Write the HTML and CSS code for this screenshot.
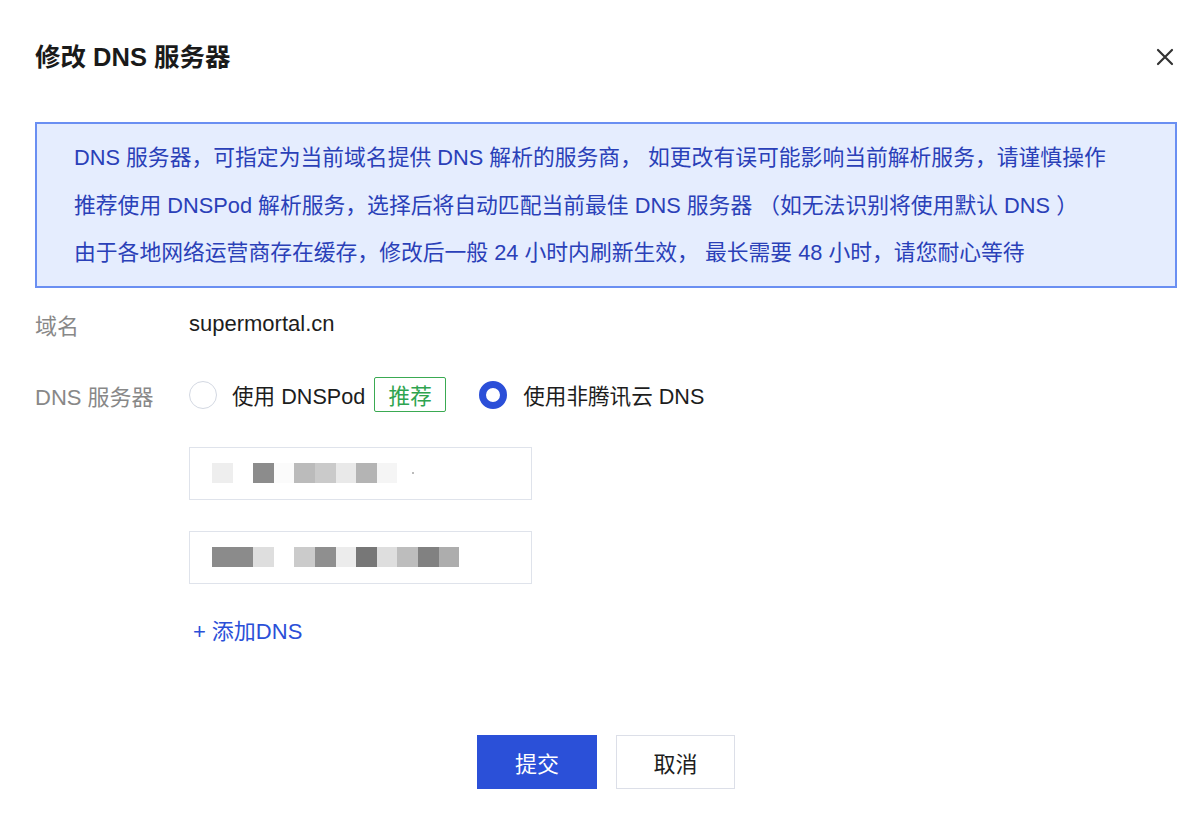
FILE: index.html
```html
<!DOCTYPE html>
<html lang="zh-CN">
<head>
<meta charset="utf-8">
<title>修改 DNS 服务器</title>
<link rel="stylesheet" href="styles.css">
</head>
<body>
<div class="dialog">
  <div class="header">
    <h1 class="title">修改 DNS 服务器</h1>
    <button class="close" aria-label="关闭">
      <svg width="18" height="18" viewBox="0 0 18 18"><path d="M2 2L16 16M16 2L2 16" stroke="#333" stroke-width="2.2" stroke-linecap="round"/></svg>
    </button>
  </div>

  <div class="notice">
    <p>DNS 服务器，可指定为当前域名提供 DNS 解析的服务商， 如更改有误可能影响当前解析服务，请谨慎操作</p>
    <p>推荐使用 DNSPod 解析服务，选择后将自动匹配当前最佳 DNS 服务器 （如无法识别将使用默认 DNS ）</p>
    <p>由于各地网络运营商存在缓存，修改后一般 24 小时内刷新生效， 最长需要 48 小时，请您耐心等待</p>
  </div>

  <div class="row row-domain">
    <div class="label">域名</div>
    <div class="value">supermortal.cn</div>
  </div>

  <div class="row row-dns">
    <div class="label">DNS 服务器</div>
    <div class="radios">
      <label class="radio">
        <span class="dot"></span>
        <span class="rtext">使用 DNSPod</span>
        <span class="tag">推荐</span>
      </label>
      <label class="radio checked">
        <span class="dot"></span>
        <span class="rtext">使用非腾讯云 DNS</span>
      </label>
    </div>
  </div>

  <div class="fields">
    <div class="input">
      <span class="px m-e"></span><span class="px m-w"></span><span class="px m-8c"></span><span class="px m-fb"></span><span class="px m-bb"></span><span class="px m-ca"></span><span class="px m-e9"></span><span class="px m-b4"></span><span class="px m-f5"></span><span class="pdot"></span>
    </div>
    <div class="input">
      <span class="px m-8b"></span><span class="px m-8b"></span><span class="px m-de"></span><span class="px m-w"></span><span class="px m-cb"></span><span class="px m-8f"></span><span class="px m-ec"></span><span class="px m-77"></span><span class="px m-de"></span><span class="px m-bd"></span><span class="px m-81"></span><span class="px m-ad"></span>
    </div>
    <a class="add" href="#"><span class="plus">+</span>添加DNS</a>
  </div>

  <div class="footer">
    <button class="btn primary">提交</button>
    <button class="btn">取消</button>
  </div>
</div>
</body>
</html>
```

FILE: styles.css
```css
* { box-sizing: border-box; }
html, body { margin: 0; padding: 0; background: #fff; }
body {
  font-family: "Liberation Sans", "Noto Sans CJK SC", sans-serif;
  color: #1d1d1d;
}
.dialog {
  width: 1200px;
  height: 816px;
  padding: 36px 23px 0 35px;
}
.header {
  display: flex;
  justify-content: space-between;
  align-items: center;
  height: 42px;
}
.title {
  margin: 0;
  font-size: 25.5px;
  font-weight: 700;
  line-height: 42px;
  color: #1a1a1a;
}
.close {
  border: 0;
  background: none;
  padding: 0;
  margin-right: 3px;
  width: 18px;
  height: 18px;
  display: flex;
}
.notice {
  margin-top: 44px;
  border: 2px solid #6a8ff2;
  background: #e5edfe;
  padding: 10px 30px 9px 37px;
  color: #2a40b8;
  font-size: 21.8px;
  line-height: 47.5px;
}
.notice p { margin: 0; white-space: nowrap; }

.row {
  display: flex;
  align-items: center;
  font-size: 22px;
  height: 36px;
}
.row-domain { margin-top: 18px; }
.row-dns { margin-top: 35px; }
.label {
  width: 154px;
  color: #888;
}
.value { color: #1d1d1d; }
.radios { display: flex; align-items: center; font-size: 21.6px; }
.radio {
  display: flex;
  align-items: center;
  color: #1d1d1d;
}
.radio + .radio { margin-left: 33px; }
.dot {
  width: 28px;
  height: 28px;
  border-radius: 50%;
  border: 1.5px solid #d3d8e2;
  background: #fff;
}
.checked .dot { border: 7.5px solid #2b4fd8; }
.rtext { margin-left: 15px; }
.checked .rtext { margin-left: 16px; }
.tag {
  margin-left: 9px;
  width: 72px;
  height: 35px;
  border: 1.5px solid #3aaa52;
  border-radius: 2px;
  color: #2ea44f;
  display: flex;
  align-items: center;
  justify-content: center;
}

.fields {
  margin-left: 154px;
  margin-top: 34px;
  display: flex;
  flex-direction: column;
  align-items: flex-start;
}
.input {
  width: 343px;
  height: 53px;
  border: 1.5px solid #dfe3eb;
  display: flex;
  align-items: center;
  padding-left: 22px;
}
.input + .input { margin-top: 31px; }
.px { width: 20.6px; height: 20px; flex: none; }
.m-w { background: #fff; }
.m-fb { background: #fbfbfb; }
.m-f5 { background: #f5f5f5; }
.m-e { background: #eeeeee; }
.m-ec { background: #ececec; }
.m-e9 { background: #e9e9e9; }
.m-de { background: #dedede; }
.m-cb { background: #cbcbcb; }
.m-ca { background: #cacaca; }
.m-bd { background: #bdbdbd; }
.m-bb { background: #bbbbbb; }
.m-b4 { background: #b4b4b4; }
.m-ad { background: #adadad; }
.m-8f { background: #8f8f8f; }
.m-8c { background: #8c8c8c; }
.m-8b { background: #8b8b8b; }
.m-81 { background: #818181; }
.m-77 { background: #777777; }
.pdot { width: 2px; height: 2px; background: #bbb; margin-left: 15px; }

.add {
  margin-top: 33px;
  margin-left: 4px;
  font-size: 22px;
  line-height: 30px;
  color: #2b4fd8;
  text-decoration: none;
}
.plus { margin-right: 6px; }

.footer {
  margin-top: 88px;
  display: flex;
  justify-content: center;
  gap: 19px;
}
.btn {
  width: 119px;
  height: 54px;
  font-family: "Liberation Sans", "Noto Sans CJK SC", sans-serif;
  font-size: 22px;
  background: #fff;
  color: #1d1d1d;
  border: 1.5px solid #dcdfe8;
  border-radius: 0;
  padding: 0;
}
.btn.primary {
  width: 120px;
  background: #2b50d8;
  border-color: #2b50d8;
  color: #fff;
}
```
